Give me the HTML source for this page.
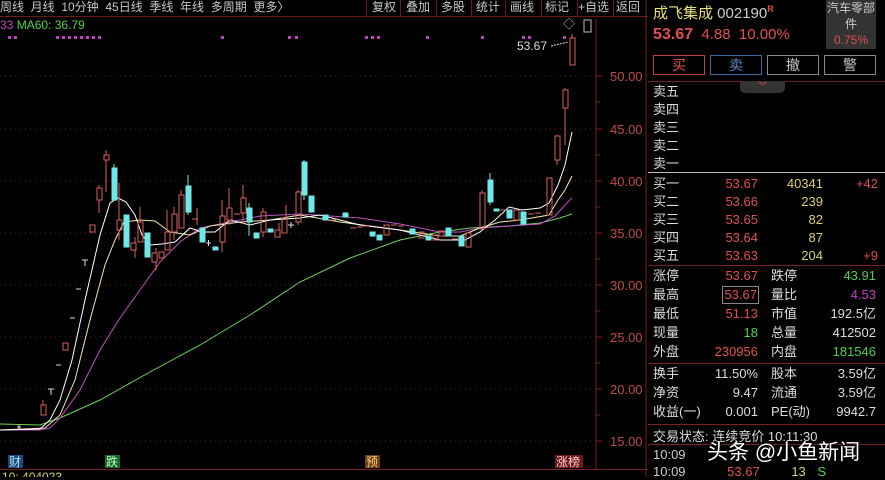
<!DOCTYPE html>
<html><head><meta charset="utf-8"><style>
*{margin:0;padding:0;box-sizing:border-box}
body{width:885px;height:477px;background:#000;overflow:hidden;position:relative;font-family:"Liberation Sans","Noto Sans CJK SC",sans-serif;font-size:12px;color:#c8c8c8}
.a{position:absolute;white-space:nowrap}
.r{color:#e0504c}.g{color:#4fd04a}.y{color:#d8d070}.w{color:#d0d0d0}.p{color:#c040c0}
.btn{position:absolute;top:55px;height:20px;width:52px;border:1px solid #888;text-align:center;line-height:18px;font-size:14px}
.hl{position:absolute;left:648px;width:237px;height:1px}
</style></head><body>
<!-- top bar -->
<div class="a" style="left:0;top:0;width:648px;height:17px;border-bottom:1px solid #6a1818"></div>
<div class="a" style="left:0;top:0;line-height:14px;font-size:12px;color:#c8c8c8">周线 &nbsp;月线 &nbsp;10分钟 &nbsp;45日线 &nbsp;季线 &nbsp;年线 &nbsp;多周期 &nbsp;更多〉</div>
<div class="a" style="left:366px;top:0;height:17px;width:282px;border-left:1px solid #6a1818"></div>
<div class="a" style="left:366px;top:0;line-height:14px;font-size:12px;color:#c8c8c8">
<span style="position:absolute;left:6px">复权</span><span style="position:absolute;left:40px">叠加</span><span style="position:absolute;left:75px">多股</span><span style="position:absolute;left:110px">统计</span><span style="position:absolute;left:144px">画线</span><span style="position:absolute;left:179px">标记</span><span style="position:absolute;left:212px">+自选</span><span style="position:absolute;left:250px">返回</span></div>
<div class="a" style="left:400px;top:0;width:1px;height:17px;background:#6a1818"></div>
<div class="a" style="left:436px;top:0;width:1px;height:17px;background:#6a1818"></div>
<div class="a" style="left:471px;top:0;width:1px;height:17px;background:#6a1818"></div>
<div class="a" style="left:505px;top:0;width:1px;height:17px;background:#6a1818"></div>
<div class="a" style="left:541px;top:0;width:1px;height:17px;background:#6a1818"></div>
<div class="a" style="left:577px;top:0;width:1px;height:17px;background:#6a1818"></div>
<div class="a" style="left:613px;top:0;width:1px;height:17px;background:#6a1818"></div>
<div class="a" style="left:0;top:18px;font-size:12px"><span class="p">33</span> <span class="g">MA60: 36.79</span></div>

<svg class="a" style="left:0;top:0" width="648" height="477">
<g stroke="#6a2020" stroke-dasharray="1,4">
<line x1="0" x2="595" y1="76" y2="76"/><line x1="0" x2="595" y1="129" y2="129"/><line x1="0" x2="595" y1="181" y2="181"/><line x1="0" x2="595" y1="233" y2="233"/><line x1="0" x2="595" y1="285" y2="285"/><line x1="0" x2="595" y1="337" y2="337"/><line x1="0" x2="595" y1="389" y2="389"/><line x1="0" x2="595" y1="441" y2="441"/>
</g>
<line x1="596" x2="596" y1="18" y2="470" stroke="#7a2020"/>
<line x1="646" x2="646" y1="0" y2="477" stroke="#7a2020"/>
<line x1="0" x2="648" y1="469.5" y2="469.5" stroke="#7a2020"/>
<g stroke="#7a2020"><line x1="596" x2="602" y1="76" y2="76"/><line x1="596" x2="602" y1="129" y2="129"/><line x1="596" x2="602" y1="181" y2="181"/><line x1="596" x2="602" y1="233" y2="233"/><line x1="596" x2="602" y1="285" y2="285"/><line x1="596" x2="602" y1="337" y2="337"/><line x1="596" x2="602" y1="389" y2="389"/><line x1="596" x2="602" y1="441" y2="441"/>
<line x1="596" x2="600" y1="102" y2="102"/><line x1="596" x2="600" y1="155" y2="155"/><line x1="596" x2="600" y1="207" y2="207"/><line x1="596" x2="600" y1="259" y2="259"/><line x1="596" x2="600" y1="311" y2="311"/><line x1="596" x2="600" y1="363" y2="363"/><line x1="596" x2="600" y1="415" y2="415"/></g>
<g fill="#c04a44" font-size="13" font-family="Liberation Sans">
<text x="610" y="81">50.00</text><text x="610" y="134">45.00</text><text x="610" y="186">40.00</text><text x="610" y="238">35.00</text><text x="610" y="290">30.00</text><text x="610" y="342">25.00</text><text x="610" y="394">20.00</text><text x="610" y="446">15.00</text></g>
<!-- dots -->
<g fill="#c040c0">
<rect x="8" y="36" width="3" height="3"/><rect x="14" y="36" width="3" height="3"/>
<rect x="56" y="36" width="3" height="3"/><rect x="62" y="36" width="3" height="3"/><rect x="68" y="36" width="3" height="3"/><rect x="74" y="36" width="3" height="3"/><rect x="80" y="36" width="3" height="3"/><rect x="86" y="36" width="3" height="3"/><rect x="92" y="36" width="3" height="3"/><rect x="98" y="36" width="3" height="3"/>
<rect x="221" y="36" width="3" height="3"/><rect x="288" y="36" width="3" height="3"/><rect x="295" y="36" width="3" height="3"/>
<rect x="365" y="36" width="3" height="3"/><rect x="371" y="36" width="3" height="3"/><rect x="377" y="36" width="3" height="3"/><rect x="426" y="36" width="3" height="3"/><rect x="481" y="36" width="3" height="3"/><rect x="522" y="36" width="3" height="3"/><rect x="528" y="36" width="3" height="3"/><rect x="563" y="36" width="3" height="3"/></g>
<text x="563" y="28" fill="#bbb" font-size="12">◇</text>
<rect x="584" y="20" width="7" height="12" fill="none" stroke="#bbb"/>
<text x="517" y="50" fill="#ddd" font-size="12" font-family="Liberation Sans">53.67</text>
<path d="M551 46 L568 42" stroke="#ddd" stroke-dasharray="2,1" fill="none"/>
<!-- MA lines -->
<polyline fill="none" stroke="#6ed05a" stroke-width="1" points="0,424 40,425 60,418 100,400 150,372 200,345 250,315 300,282 350,258 400,240 440,232 470,228 510,226 540,223 560,218 572,214"/>
<polyline fill="none" stroke="#c050c0" stroke-width="1" points="0,430 40,430 50,428 60,418 80,390 100,350 120,318 140,290 160,262 180,242 200,228 220,224 260,216 300,214 360,218 400,224 440,232 460,232 480,228 510,226 540,224 555,216 565,205 572,198"/>
<polyline fill="none" stroke="#f0e8b0" stroke-width="1" points="0,430 45,428 60,415 75,380 90,320 105,265 115,240 124,222 140,220 155,221 170,232 190,235 210,226 240,222 270,220 300,215 340,222 400,230 440,236 460,236 480,228 500,222 520,220 549,215 558,200 565,190 572,176"/>
<polyline fill="none" stroke="#ffffff" stroke-width="1" points="0,430 40,429 50,420 60,400 72,360 85,300 100,235 110,203 118,198 126,202 135,215 142,235 150,245 162,244 175,242 190,228 202,232 215,232 230,220 250,225 270,220 300,218 320,215 360,225 400,230 440,240 465,240 480,232 495,220 509,207 522,210 540,208 549,203 558,185 565,165 572,132"/>
<!-- candles -->
<g fill="none" stroke="#d9605a" stroke-width="1">
<rect x="41" y="405" width="5" height="10"/><rect x="63" y="343" width="5" height="7"/><rect x="90" y="225" width="5" height="7"/>
<rect x="97" y="188" width="5" height="12"/><rect x="104" y="155" width="5" height="5"/><rect x="117" y="220" width="5" height="10"/>
<rect x="131" y="243" width="5" height="7"/><rect x="138" y="222" width="5" height="20"/><rect x="152" y="253" width="5" height="9"/><rect x="159" y="252" width="5" height="6"/>
<rect x="165" y="232" width="5" height="18"/><rect x="172" y="214" width="5" height="18"/><rect x="179" y="195" width="5" height="33"/>
<rect x="220" y="216" width="5" height="26"/><rect x="227" y="208" width="5" height="12"/><rect x="241" y="198" width="5" height="15"/>
<rect x="261" y="212" width="5" height="20"/><rect x="275" y="230" width="5" height="7"/><rect x="282" y="218" width="5" height="15"/><rect x="296" y="192" width="5" height="30"/>
<rect x="384" y="225" width="5" height="10"/><rect x="419" y="232" width="5" height="6"/><rect x="433" y="235" width="5" height="5"/><rect x="439" y="231" width="5" height="5"/><rect x="466" y="233" width="5" height="14"/>
<rect x="480" y="193" width="5" height="36"/><rect x="514" y="210" width="5" height="10"/><rect x="547" y="178" width="5" height="37"/><rect x="555" y="136" width="5" height="24"/><rect x="563" y="90" width="5" height="18"/><rect x="570" y="38" width="5" height="27"/>
<path d="M43 400V405M99 185V188M99 200V213M106 150V155M106 160V192M119 183V220M119 230V240M135 237V243M135 250V258M140 207V222M156 248V253M156 262V270M167 210V232M174 207V214M174 232V240M181 190V195M197 208V225M222 200V216M222 242V252M229 188V208M229 220V225M243 185V198M243 213V224M263 208V212M263 232V237M279 223V230M286 205V218M298 190V192M298 222V225M482 190V193M557 135V136M557 160V165M565 88V90M565 108V145M572 34V38M192 219H198M234 214H240M330 220H336M350 228H356M357 227H363M363 226H369M391 225H397M398 226H404M452 239H458M500 210H506M528 214H534M535 213H541"/>
</g>
<g fill="#6fe8e8" stroke="#6fe8e8">
<rect x="112" y="168" width="5" height="32"/><rect x="124" y="215" width="5" height="32"/><rect x="145" y="233" width="5" height="24"/>
<rect x="186" y="186" width="5" height="26"/><rect x="200" y="228" width="5" height="14"/><rect x="213" y="247" width="5" height="3"/>
<rect x="247" y="208" width="5" height="14"/><rect x="254" y="233" width="5" height="5"/><rect x="268" y="229" width="5" height="3"/>
<rect x="302" y="162" width="5" height="33"/><rect x="309" y="196" width="5" height="16"/><rect x="323" y="215" width="5" height="5"/><rect x="343" y="213" width="5" height="4"/>
<rect x="370" y="232" width="5" height="4"/><rect x="377" y="235" width="5" height="5"/><rect x="410" y="229" width="5" height="5"/><rect x="426" y="236" width="5" height="4"/><rect x="446" y="228" width="5" height="8"/><rect x="459" y="236" width="5" height="10"/>
<rect x="488" y="180" width="5" height="22"/><rect x="494" y="209" width="5" height="2"/><rect x="507" y="210" width="5" height="8"/><rect x="521" y="212" width="5" height="12"/>
<path fill="none" d="M114 164V168M188 175V186M188 212V215M304 160V162M304 195V200M490 173V180M490 202V205M249 203V208M249 222V236"/>
</g>
<g stroke="#ddd"><path d="M48 389H54M51 389V395M56 365H61M70 318H75M76 289H81M82 260H88M85 260V266M206 243H211M208.5 240V246M17 427H21M19 425V430M288 225H294M291 222V228"/></g>
<!-- bottom tags -->
<rect x="8" y="455" width="15" height="13" fill="#1a4a7a"/><text x="9" y="466" fill="#bde" font-size="12">财</text>
<rect x="105" y="455" width="15" height="13" fill="#1a6a2a"/><text x="106" y="466" fill="#bfb" font-size="12">跌</text>
<rect x="365" y="455" width="15" height="13" fill="#6a4010"/><text x="366" y="466" fill="#fc8" font-size="12">预</text>
<rect x="555" y="455" width="28" height="13" fill="#6a1a1a"/><text x="556" y="466" fill="#fcc" font-size="12">涨榜</text>
<text x="2" y="481" fill="#d8d070" font-size="12">10: 404023</text>
</svg>

<!-- right panel -->
<div class="a" style="left:653px;top:2px;font-size:15px;color:#e8e070">成飞集成 <span style="color:#ccc;font-size:15px">002190</span><sup class="r" style="font-size:9px;font-weight:bold">R</sup></div>
<div class="a" style="left:826px;top:0;width:50px;height:49px;background:#333;text-align:center;font-size:12px;line-height:16px;color:#ccc">汽车零部<br>件<br><span class="r">0.75%</span></div>
<div class="a" style="left:653px;top:26px;font-size:15px"><b class="r" style="font-size:16px">53.67</b> <span class="r">&nbsp;4.88 &nbsp;10.00%</span></div>
<div class="btn r" style="left:653px;border-color:#c04040">买</div>
<div class="btn" style="left:710px;border-color:#3a6aa0;color:#5a8ac0">卖</div>
<div class="btn" style="left:767px">撤</div>
<div class="btn" style="left:824px">警</div>
<div class="hl" style="top:81px;background:#7a2020"></div>
<div class="a" style="left:740px;top:81px;width:45px;height:12px;background:#333;border-radius:0 0 5px 5px;text-align:center;color:#d05050;font-size:9px;line-height:11px">︾</div>
<div class="a" style="left:653px;top:83px;font-size:13px;line-height:18px;color:#ddd">卖五<br>卖四<br>卖三<br>卖二<br>卖一</div>
<div class="hl" style="top:172px;background:#bbb"></div>
<div class="a" style="left:653px;top:175px;font-size:13px;line-height:18px;color:#ddd;width:225px">
<div style="position:relative;height:18px">买一<span class="a r" style="right:120px">53.67</span><span class="a y" style="right:55px">40341</span><span class="a r" style="right:0">+42</span></div>
<div style="position:relative;height:18px">买二<span class="a r" style="right:120px">53.66</span><span class="a y" style="right:55px">239</span></div>
<div style="position:relative;height:18px">买三<span class="a r" style="right:120px">53.65</span><span class="a y" style="right:55px">82</span></div>
<div style="position:relative;height:18px">买四<span class="a r" style="right:120px">53.64</span><span class="a y" style="right:55px">87</span></div>
<div style="position:relative;height:18px">买五<span class="a r" style="right:120px">53.63</span><span class="a y" style="right:55px">204</span><span class="a r" style="right:0">+9</span></div></div>
<div class="hl" style="top:265px;background:#7a2020"></div>
<div class="a" style="left:653px;top:266px;font-size:13px;line-height:19px;color:#ddd;width:223px">
<div style="position:relative;height:19px">涨停<span class="a r" style="right:118px">53.67</span><span class="a" style="left:118px">跌停</span><span class="a g" style="right:0">43.91</span></div>
<div style="position:relative;height:19px">最高<span class="a r" style="right:117px;border:1px solid #888;padding:0 1px;line-height:16px;top:1px">53.67</span><span class="a" style="left:118px">量比</span><span class="a p" style="right:0">4.53</span></div>
<div style="position:relative;height:19px">最低<span class="a r" style="right:118px">51.13</span><span class="a" style="left:118px">市值</span><span class="a" style="right:0">192.5亿</span></div>
<div style="position:relative;height:19px">现量<span class="a g" style="right:118px">18</span><span class="a" style="left:118px">总量</span><span class="a" style="right:0">412502</span></div>
<div style="position:relative;height:19px">外盘<span class="a r" style="right:118px">230956</span><span class="a" style="left:118px">内盘</span><span class="a g" style="right:0">181546</span></div></div>
<div class="hl" style="top:363px;background:#7a2020"></div>
<div class="a" style="left:653px;top:364px;font-size:13px;line-height:19px;color:#ddd;width:223px">
<div style="position:relative;height:19px">换手<span class="a" style="right:118px">11.50%</span><span class="a" style="left:118px">股本</span><span class="a" style="right:0">3.59亿</span></div>
<div style="position:relative;height:19px">净资<span class="a" style="right:118px">9.47</span><span class="a" style="left:118px">流通</span><span class="a" style="right:0">3.59亿</span></div>
<div style="position:relative;height:19px">收益(一)<span class="a" style="right:118px">0.001</span><span class="a" style="left:118px">PE(动)</span><span class="a" style="right:0">9942.7</span></div></div>
<div class="hl" style="top:424px;background:#7a2020"></div>
<div class="a" style="left:653px;top:426px;font-size:13px;color:#ddd">交易状态: 连续竞价 10:11:30</div>
<div class="hl" style="top:444px;background:#7a2020"></div>
<div class="a" style="left:653px;top:446px;font-size:13px;line-height:17px;color:#ccc">10:09<br>10:09 <span class="r" style="margin-left:38px">53.67</span> <span class="y" style="margin-left:28px">13</span> <span class="g" style="margin-left:8px">S</span></div>
<div class="a" style="left:707px;top:436px;font-size:21px;color:#fff;text-shadow:0 0 3px #000,1px 1px 2px #000">头条 @小鱼新闻</div>
</body></html>
